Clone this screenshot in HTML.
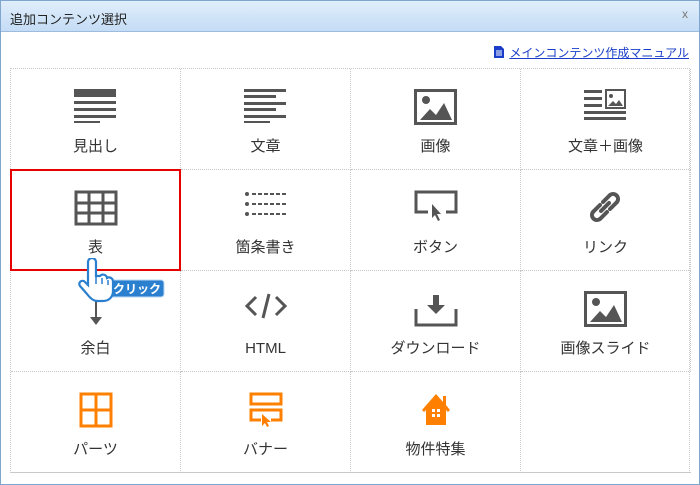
<!DOCTYPE html>
<html><head><meta charset="utf-8"><style>
*{margin:0;padding:0;box-sizing:border-box}
body{width:700px;height:485px;background:#fff;font-family:"Liberation Sans","Noto Sans CJK JP",sans-serif;position:relative;overflow:hidden}
.frame{position:absolute;left:0;top:0;width:700px;height:485px;border:1px solid #7fa6cf}
.title{position:absolute;left:1px;top:1px;width:698px;height:31px;background:linear-gradient(#e0eefb,#c4dcf5);border-bottom:1px solid #9dbbdc;font-size:13px;color:#222;padding:8px 0 0 9px}
.x{position:absolute;right:11px;top:6px;font-size:12px;color:#777}
.link{position:absolute;right:11px;top:44px;font-size:12px;color:#1a3ec9;text-decoration:underline}
.grid{position:absolute;left:10px;top:68px;width:680px;height:405px;border:1px dotted #c8c8c8}
.cell{position:absolute;width:170px;height:101px;border-right:1px dotted #c8c8c8;border-bottom:1px dotted #c8c8c8;text-align:center}
.cell svg{position:absolute;left:50%;top:20px;transform:translateX(-50%)}
.cell .l{position:absolute;left:0;right:0;top:67px;height:22px;line-height:22px;font-size:15px;color:#333}
.red{position:absolute;left:10px;top:169px;width:171px;height:102px;border:2px solid #e60000}
</style></head><body>
<div class="frame"></div>
<div class="title">追加コンテンツ選択<span class="x">x</span></div>
<div class="link"><svg width="10" height="12" style="vertical-align:-1px;margin-right:5px"><path d="M0 0h7l3 3v9H0z" fill="#1a3ec9"/><path d="M2 5h6M2 7h6M2 9h6" stroke="#fff"/></svg>メインコンテンツ作成マニュアル</div>
<div class="grid">
<div class="cell" style="left:0;top:0"><svg width="44" height="34"><rect x="0" y="0" width="42" height="8" fill="#555"/><rect y="12" width="42" height="3" fill="#555"/><rect y="19" width="42" height="3" fill="#555"/><rect y="26" width="42" height="3" fill="#555"/><rect y="32" width="26" height="2" fill="#555"/></svg><div class="l">見出し</div></div>
<div class="cell" style="left:170px;top:0"><svg width="44" height="34"><g fill="#555"><rect y="0" width="42" height="3"/><rect y="6" width="32" height="3"/><rect y="13" width="42" height="3"/><rect y="19" width="32" height="3"/><rect y="26" width="42" height="3"/><rect y="32" width="26" height="2"/></g></svg><div class="l">文章</div></div>
<div class="cell" style="left:340px;top:0"><svg width="44" height="36"><rect x="1.5" y="1.5" width="40" height="33" fill="none" stroke="#555" stroke-width="3"/><circle cx="12" cy="11" r="4" fill="#555"/><path d="M6 31l10-11 6 6 8-12 8 17z" fill="#555"/></svg><div class="l">画像</div></div>
<div class="cell" style="left:510px;top:0"><svg width="44" height="36"><g fill="#555"><rect y="1" width="18" height="3"/><rect y="8" width="18" height="3"/><rect y="15" width="18" height="3"/><rect y="22" width="42" height="3"/><rect y="28" width="42" height="3"/></g><rect x="22" y="1" width="19" height="18" fill="none" stroke="#555" stroke-width="2"/><circle cx="27" cy="7" r="2" fill="#555"/><path d="M24 17l5-5 3 3 3-4 4 6z" fill="#555"/></svg><div class="l">文章＋画像</div></div>
<div class="cell" style="left:0;top:101px"><svg width="44" height="36"><g fill="none" stroke="#555" stroke-width="3"><rect x="2" y="2" width="40" height="32"/><path d="M15 2v32M29 2v32M2 13h40M2 23h40"/></g></svg><div class="l">表</div></div>
<div class="cell" style="left:170px;top:101px"><svg width="44" height="30"><g fill="#555"><circle cx="3" cy="4" r="2"/><circle cx="3" cy="14" r="2"/><circle cx="3" cy="24" r="2"/></g><g stroke="#555" stroke-width="2" stroke-dasharray="4 2"><path d="M8 4h34M8 14h34M8 24h34"/></g></svg><div class="l">箇条書き</div></div>
<div class="cell" style="left:340px;top:101px"><svg width="44" height="34"><path d="M14 22H2V2h40v20H32" fill="none" stroke="#555" stroke-width="3"/><path d="M18 14l0 14 3-3 3 6 2-1-3-6 4 0z" fill="#555"/></svg><div class="l">ボタン</div></div>
<div class="cell" style="left:510px;top:101px"><svg width="36" height="34"><g fill="none" stroke="#555" stroke-width="4" stroke-linecap="round"><path d="M15 12l7-7a5 5 0 0 1 7 7l-7 7"/><path d="M19 22l-7 7a5 5 0 0 1-7-7l7-7"/><path d="M13 21l8-8"/></g></svg><div class="l">リンク</div></div>
<div class="cell" style="left:0;top:202px"><svg width="20" height="36"><path d="M10 0v28" stroke="#555" stroke-width="2"/><path d="M4 26h12l-6 8z" fill="#555"/></svg><div class="l">余白</div></div>
<div class="cell" style="left:170px;top:202px"><svg width="44" height="30"><g fill="none" stroke="#555" stroke-width="3"><path d="M12 6L3 15l9 9M32 6l9 9-9 9M25 3l-6 24"/></g></svg><div class="l">HTML</div></div>
<div class="cell" style="left:340px;top:202px"><svg width="44" height="36"><path d="M2 18v16h40V18" fill="none" stroke="#555" stroke-width="3"/><path d="M19 4h6v10h6l-9 9-9-9h6z" fill="#555"/></svg><div class="l">ダウンロード</div></div>
<div class="cell" style="left:510px;top:202px"><svg width="44" height="36"><rect x="1.5" y="1.5" width="40" height="33" fill="none" stroke="#555" stroke-width="3"/><circle cx="12" cy="11" r="4" fill="#555"/><path d="M6 31l10-11 6 6 8-12 8 17z" fill="#555"/></svg><div class="l">画像スライド</div></div>
<div class="cell" style="left:0;top:303px;height:101px"><svg width="34" height="36"><g fill="none" stroke="#ff8000" stroke-width="3"><rect x="2" y="2" width="30" height="32"/><path d="M17 2v32M2 18h30"/></g></svg><div class="l">パーツ</div></div>
<div class="cell" style="left:170px;top:303px;height:101px"><svg width="34" height="36"><g fill="none" stroke="#ff8000" stroke-width="3"><rect x="2" y="2" width="30" height="10"/><path d="M12 28H2V18h30v10H22"/></g><path d="M13 22v12l3-3 2 4 2-1-2-4h4z" fill="#ff8000"/></svg><div class="l">バナー</div></div>
<div class="cell" style="left:340px;top:303px;height:101px"><svg width="30" height="34"><path d="M15 2L1 18l2 2 2-2v15h20V18l2 2 2-2-4-5V4h-3v6z" fill="#ff8000"/><g fill="#fff"><rect x="11" y="17" width="3" height="3"/><rect x="16" y="17" width="3" height="3"/><rect x="11" y="22" width="3" height="3"/><rect x="16" y="22" width="3" height="3"/></g></svg><div class="l">物件特集</div></div>
<div class="cell" style="left:510px;top:303px;height:101px;border-right:none"></div>
</div>
<div class="red"></div>
<svg style="position:absolute;left:76px;top:258px" width="92" height="50">
<rect x="32" y="22" width="56" height="17" rx="3" fill="#2a7fcf" stroke="#bcd9f3"/>
<text x="37" y="35" font-size="12" font-weight="bold" fill="#fff" font-family="Liberation Sans,Noto Sans CJK JP,sans-serif">クリック</text>
<path d="M12 4a4 4 0 0 1 8 0v14l4 0a4 4 0 0 1 7 2a4 4 0 0 1 6 3v10c0 6-4 10-10 10h-6c-4 0-7-3-10-7l-7-8a3 3 0 0 1 5-4l3 3z" fill="#fff" stroke="#2a7fcf" stroke-width="2.2"/>
<path d="M20 18v8M26 20v6M32 22v5" stroke="#2a7fcf" stroke-width="1.5"/>
</svg>
</body></html>
